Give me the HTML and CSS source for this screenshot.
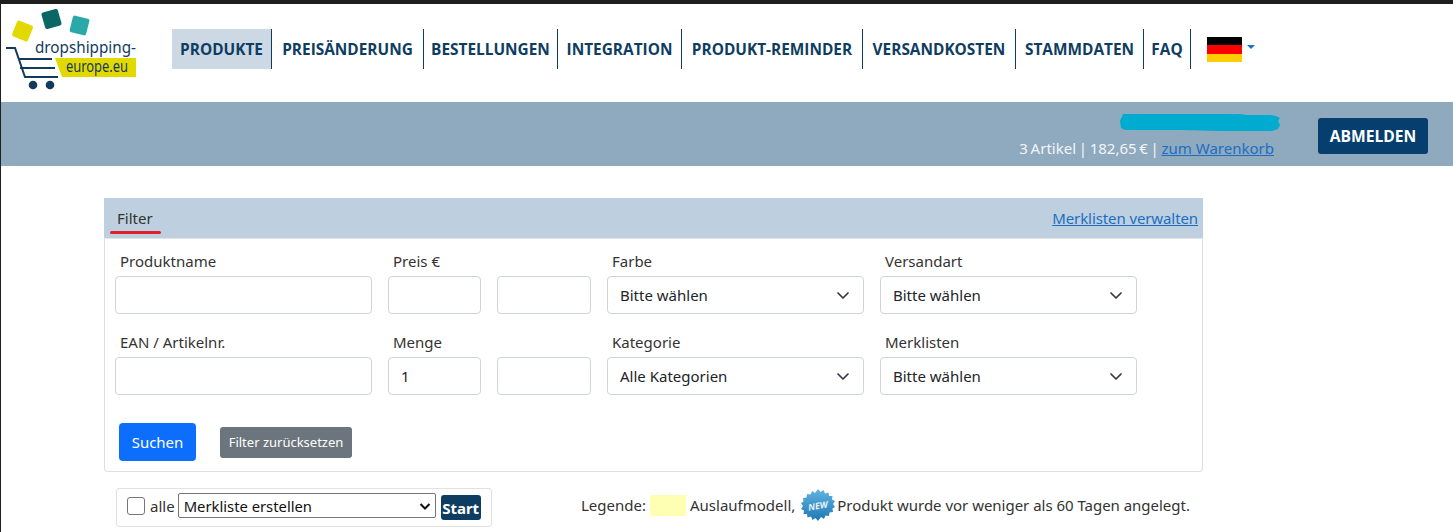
FILE: index.html
```html
<!DOCTYPE html>
<html lang="de">
<head>
<meta charset="utf-8">
<title>dropshipping-europe.eu</title>
<link rel="stylesheet" href="styles.css">
</head>
<body>
<header class="top">
  <a class="logo" href="#">
    <svg width="170" height="90" viewBox="0 0 170 90">
      <rect x="13" y="18.500" width="17" height="17" rx="2" fill="#e3d800" transform="rotate(22 21.500 27)"/>
      <rect x="42" y="6.500" width="17" height="17" rx="2" fill="#0b6764" transform="rotate(-16 50.500 15)"/>
      <rect x="70" y="13" width="17" height="17" rx="2" fill="#2ba8a8" transform="rotate(14 78.500 21.500)"/>
      <polygon points="54,54 135,54 135,73 61,73" fill="#e3d800"/>
      <text x="34" y="48.500" class="logo-a" textLength="101" lengthAdjust="spacingAndGlyphs">dropshipping-</text>
      <text x="65" y="68" class="logo-b" textLength="62" lengthAdjust="spacingAndGlyphs">europe.eu</text>
      <path d="M5 44H14L24 73H57M17 55H51M19 64H54" fill="none" stroke="#123a5e" stroke-width="2"/>
      <circle cx="32" cy="81" r="4.300" fill="#123a5e"/>
      <circle cx="49" cy="81" r="4.300" fill="#123a5e"/>
    </svg>
  </a>
  <nav class="nav">
    <a class="nav-item active" href="#">PRODUKTE</a>
    <a class="nav-item" href="#">PREISÄNDERUNG</a>
    <a class="nav-item" href="#">BESTELLUNGEN</a>
    <a class="nav-item" href="#">INTEGRATION</a>
    <a class="nav-item" href="#">PRODUKT-REMINDER</a>
    <a class="nav-item" href="#">VERSANDKOSTEN</a>
    <a class="nav-item" href="#">STAMMDATEN</a>
    <a class="nav-item" href="#">FAQ</a>
  </nav>
  <div class="lang">
    <span class="flag"><i class="flag-b"></i><i class="flag-r"></i><i class="flag-g"></i></span>
    <span class="caret"></span>
  </div>
</header>

<section class="userbar">
  <div class="userinfo">
    <svg class="scribble" width="160" height="18" viewBox="0 0 160 18">
      <path d="M3 0H120L126 1H150L156 2L160 4L158 7L160 11L158 15L152 17H100L60 16H5L1 14L0 7Z" fill="#00abd0"/>
    </svg>
    <div class="cartline">3 Artikel | 182,65 € | <a href="#">zum Warenkorb</a></div>
  </div>
  <a class="logout" href="#">ABMELDEN</a>
</section>

<main class="content">
  <section class="filter">
    <div class="filter-head">
      <span class="filter-title">Filter</span>
      <a class="filter-link" href="#">Merklisten verwalten</a>
    </div>
    <form class="filter-body">
      <div class="form-grid">
        <div class="field"><label>Produktname</label><input class="ctl" type="text"></div>
        <div class="field"><label>Preis €</label><input class="ctl" type="text"></div>
        <div class="field"><label>&nbsp;</label><input class="ctl" type="text"></div>
        <div class="field"><label>Farbe</label><div class="ctl sel">Bitte wählen<svg width="16" height="16" viewBox="0 0 16 16"><path d="M3 6l5 5 5-5" fill="none" stroke="#343a40" stroke-width="1.700" stroke-linecap="round" stroke-linejoin="round"/></svg></div></div>
        <div class="field"><label>Versandart</label><div class="ctl sel">Bitte wählen<svg width="16" height="16" viewBox="0 0 16 16"><path d="M3 6l5 5 5-5" fill="none" stroke="#343a40" stroke-width="1.700" stroke-linecap="round" stroke-linejoin="round"/></svg></div></div>
        <div class="field"><label>EAN / Artikelnr.</label><input class="ctl" type="text"></div>
        <div class="field"><label>Menge</label><input class="ctl" type="text" value="1"></div>
        <div class="field"><label>&nbsp;</label><input class="ctl" type="text"></div>
        <div class="field"><label>Kategorie</label><div class="ctl sel">Alle Kategorien<svg width="16" height="16" viewBox="0 0 16 16"><path d="M3 6l5 5 5-5" fill="none" stroke="#343a40" stroke-width="1.700" stroke-linecap="round" stroke-linejoin="round"/></svg></div></div>
        <div class="field"><label>Merklisten</label><div class="ctl sel">Bitte wählen<svg width="16" height="16" viewBox="0 0 16 16"><path d="M3 6l5 5 5-5" fill="none" stroke="#343a40" stroke-width="1.700" stroke-linecap="round" stroke-linejoin="round"/></svg></div></div>
      </div>
      <div class="actions">
        <button class="btn-search" type="button">Suchen</button>
        <button class="btn-reset" type="button">Filter zurücksetzen</button>
      </div>
    </form>
  </section>

  <div class="bottom">
    <div class="bulk">
      <span class="check"></span>
      <span class="bulk-all">alle</span>
      <div class="native-sel">Merkliste erstellen<svg width="12" height="12" viewBox="0 0 12 12"><path d="M1.500 4l4.500 4.500L10.500 4" fill="none" stroke="#111" stroke-width="2"/></svg></div>
      <button class="btn-start" type="button">Start</button>
    </div>
    <div class="legend">
      <span>Legende:</span>
      <span class="swatch"></span>
      <span>Auslaufmodell,</span>
      <svg class="badge" width="34" height="34" viewBox="0 0 34 34">
        <defs><linearGradient id="bg" x1="0" y1="0" x2="0" y2="1"><stop offset="0" stop-color="#62b4e0"/><stop offset="1" stop-color="#1f78b4"/></linearGradient></defs>
        <polygon fill="url(#bg)" points="17,1 19.500,4 22.500,2 24,5.500 27.500,4.500 28,8 31.500,8 31,11.500 34,13 32,16 34,19 31.500,20.500 32,24 28.500,24.500 28,28 24.500,27.500 23,31 20,29 17,33 14.500,30 11.500,32 10,28.500 6.500,29.500 6,26 2.500,26 3,22.500 0,21 2,18 0,15 2.500,13.500 2,10 5.500,9.500 6,6 9.500,6.500 11,3 14,5"/>
        <text x="17" y="21" class="badge-text" transform="rotate(-10 17 18)">NEW</text>
      </svg>
      <span class="legend-note">Produkt wurde vor weniger als 60 Tagen angelegt.</span>
    </div>
  </div>
</main>
</body>
</html>
```
FILE: styles.css
```css
* { box-sizing: border-box; }
html, body { height: 100%; }
body {
  margin: 0;
  overflow: hidden;
  background: #fff;
  color: #212529;
  font-family: "Noto Sans", "Open Sans", sans-serif;
  font-size: 15px;
  border-top: 4px solid #1f1f1f;
  border-left: 1px solid #1f1f1f;
}
a { color: #1b6ec2; }

.top { display: flex; align-items: flex-start; height: 98px; }
.logo { display: block; width: 171px; height: 98px; flex: none; }
.logo svg { display: block; }
.logo-a { font: 17px "Noto Sans", sans-serif; fill: #123a5e; }
.logo-b { font: 16px "Noto Sans", sans-serif; fill: #123a5e; }

.nav {
  display: grid;
  grid-template-columns: 100px 152px 134px 124px 181px 153px 128px 47px;
  margin-top: 25px;
}
.nav-item {
  display: flex;
  align-items: center;
  justify-content: center;
  height: 40px;
  border-right: 1px solid #0f3d62;
  color: #0f3d62;
  font-family: "Open Sans", sans-serif;
  font-weight: 700;
  font-size: 15.400px;
  text-decoration: none;
  white-space: nowrap;
}
.nav-item.active { background: #ccd8e3; }
.lang { display: flex; align-items: flex-start; margin: 33px 0 0 16px; }
.flag { display: flex; flex-direction: column; width: 35px; height: 25px; }
.flag i { flex: 1; display: block; }
.flag-b { background: #000; }
.flag-r { background: #f00; }
.flag-g { background: #ffce00; }
.caret {
  margin: 8px 0 0 5px;
  border-left: 4.500px solid transparent;
  border-right: 4.500px solid transparent;
  border-top: 4.500px solid #1b6ec2;
}

.userbar {
  display: flex;
  justify-content: flex-end;
  height: 64px;
  padding-right: 25px;
  background: #8fa9bf;
}
.userinfo { display: flex; flex-direction: column; align-items: flex-end; }
.scribble { display: block; margin-top: 12px; }
.cartline { margin: 5px 6px 0 0; color: #f2f5f8; line-height: 22px; white-space: nowrap; word-spacing: -1.200px; }
.cartline a { word-spacing: normal; }
.logout {
  display: flex;
  align-items: center;
  justify-content: center;
  width: 110px;
  height: 36px;
  margin: 16px 0 0 38px;
  background: #063f6e;
  border-radius: 3px;
  color: #fff;
  font-family: "Open Sans", sans-serif;
  font-weight: 700;
  font-size: 15.600px;
  text-decoration: none;
}

.content { padding: 32px 0 0 103px; }
.filter { width: 1099px; }
.filter-head {
  display: flex;
  justify-content: space-between;
  align-items: center;
  height: 40px;
  padding: 0 5px 0 13px;
  background: #bed0df;
}
.filter-link { letter-spacing: -0.100px; }
.filter-title { position: relative; color: #333; }
.filter-title::after {
  content: "";
  position: absolute;
  left: -7px;
  right: -8px;
  bottom: -6px;
  height: 3px;
  border-radius: 2px;
  background: #e0202c;
}
.filter-body {
  height: 234px;
  padding: 11px 0 0 10px;
  border: 1px solid #dcdfe3;
  border-top-color: #e3e6e9;
  border-radius: 0 0 4px 4px;
}
.form-grid {
  display: grid;
  grid-template-columns: 257px 93px 94px 257px 257px;
  column-gap: 16px;
  row-gap: 17px;
}
.field label {
  display: block;
  height: 24px;
  margin-bottom: 2px;
  padding-left: 5px;
  line-height: 22px;
  color: #333;
}
.ctl {
  display: block;
  width: 100%;
  height: 38px;
  padding: 0 12px;
  border: 1px solid #ced4da;
  border-radius: 4px;
  background: #fff;
  color: #212529;
  font: inherit;
  line-height: 36px;
}
.sel { display: flex; justify-content: space-between; align-items: center; }
.actions { display: flex; align-items: center; gap: 24px; margin: 28px 0 0 4px; }
.btn-search {
  width: 77px;
  height: 38px;
  border: 0;
  border-radius: 4px;
  background: #0d6efd;
  color: #fff;
  font: inherit;
}
.btn-reset {
  width: 132px;
  height: 31px;
  border: 0;
  border-radius: 3px;
  background: #6c757d;
  color: #fff;
  font: inherit;
  font-size: 13px;
}

.bottom { display: flex; align-items: flex-start; margin-top: 16px; padding-left: 12px; }
.bulk {
  display: flex;
  align-items: center;
  width: 376px;
  height: 39px;
  padding: 0 0 4px 10px;
  border: 1px solid #dfe2e5;
  border-radius: 3px;
}
.check { width: 18px; height: 18px; border: 1px solid #767676; border-radius: 3px; }
.bulk-all { margin: 0 3px 0 5px; color: #333; }
.native-sel {
  display: flex;
  justify-content: space-between;
  align-items: center;
  width: 258px;
  height: 25px;
  padding: 0 4px 0 5px;
  border: 1px solid #767676;
  border-radius: 2px;
  font-size: 14.800px;
  color: #111;
}
.btn-start {
  width: 40px;
  height: 25px;
  margin: 4px 0 0 5px;
  padding: 0;
  border: 0;
  border-radius: 3px;
  background: #0f3d62;
  color: #fff;
  font: inherit;
  font-weight: 700;
}
.legend {
  display: flex;
  align-items: center;
  height: 34px;
  margin-left: 89px;
  color: #333;
  white-space: nowrap;
}
.swatch { width: 36px; height: 21px; margin: 0 4px 0 4px; background: #ffffb3; }
.badge { margin: 0 2px 0 6px; }
.legend-note { letter-spacing: -0.020px; }
.badge-text { font: italic 700 9px "Open Sans", sans-serif; fill: #e8f2f8; text-anchor: middle; }
```
